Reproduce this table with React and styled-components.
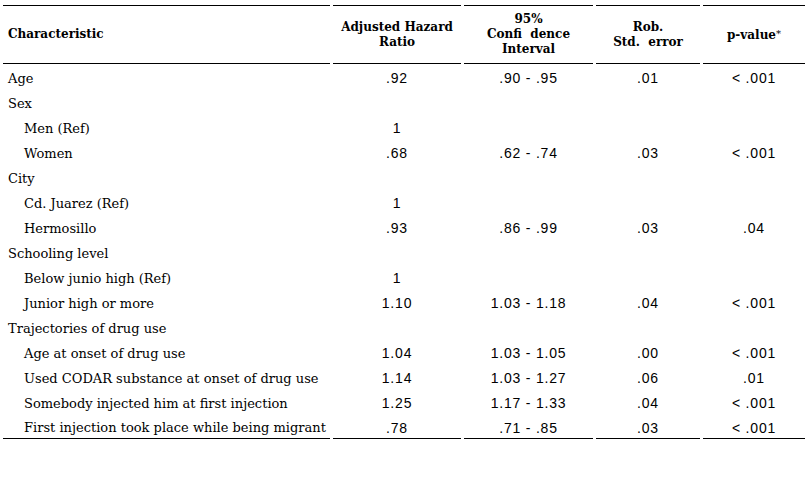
import styled, { createGlobalStyle } from "styled-components";

const GlobalStyle = createGlobalStyle`
  body {
    margin: 0;
    background: #fff;
    color: #000;
  }
`;

const rows = [
  { label: "Age", hr: ".92", ci: ".90 - .95", se: ".01", p: "< .001" },
  { label: "Sex" },
  { label: "Men (Ref)", sub: true, hr: "1" },
  { label: "Women", sub: true, hr: ".68", ci: ".62 - .74", se: ".03", p: "< .001" },
  { label: "City" },
  { label: "Cd. Juarez (Ref)", sub: true, hr: "1" },
  { label: "Hermosillo", sub: true, hr: ".93", ci: ".86 - .99", se: ".03", p: ".04" },
  { label: "Schooling level" },
  { label: "Below junio high (Ref)", sub: true, hr: "1" },
  { label: "Junior high or more", sub: true, hr: "1.10", ci: "1.03 - 1.18", se: ".04", p: "< .001" },
  { label: "Trajectories of drug use" },
  { label: "Age at onset of drug use", sub: true, hr: "1.04", ci: "1.03 - 1.05", se: ".00", p: "< .001" },
  { label: "Used CODAR substance at onset of drug use", sub: true, hr: "1.14", ci: "1.03 - 1.27", se: ".06", p: ".01" },
  { label: "Somebody injected him at first injection", sub: true, hr: "1.25", ci: "1.17 - 1.33", se: ".04", p: "< .001" },
  { label: "First injection took place while being migrant", sub: true, hr: ".78", ci: ".71 - .85", se: ".03", p: "< .001" },
];

const App = () => {
  return (
    <>
      <GlobalStyle />
      <Table>
        <colgroup>
          <col style={{ width: 327 }} />
          <col style={{ width: 128 }} />
          <col style={{ width: 129 }} />
          <col style={{ width: 104 }} />
          <col style={{ width: 102 }} />
        </colgroup>
        <thead>
          <tr>
            <Head $left>Characteristic</Head>
            <Head>Adjusted Hazard<br />Ratio</Head>
            <Head>95%<br />Confi&nbsp; dence<br />Interval</Head>
            <Head>Rob.<br />Std.&nbsp; error</Head>
            <Head>p-value<Star>*</Star></Head>
          </tr>
        </thead>
        <tbody>
          {rows.map((r, i) => (
            <Row key={i} $last={i === rows.length - 1}>
              <Label $sub={r.sub}>{r.label}</Label>
              <Num>{r.hr}</Num>
              <Num>{r.ci}</Num>
              <Num>{r.se}</Num>
              <Num>{r.p}</Num>
            </Row>
          ))}
        </tbody>
      </Table>
    </>
  );
};

const Table = styled.table`
  margin-top: 5px;
  width: 808px;
  table-layout: fixed;
  border-collapse: separate;
  border-spacing: 3px 0;
`;

const Head = styled.th`
  height: 57px;
  padding: 0;
  border-top: 1px solid #000;
  border-bottom: 1px solid #000;
  text-align: ${(p) => (p.$left ? "left" : "center")};
  padding-left: ${(p) => (p.$left ? "5px" : "0")};
  vertical-align: middle;
  font-family: "DejaVu Serif", serif;
  font-size: 12px;
  font-weight: bold;
  line-height: 15px;
`;

const Star = styled.span`
  font-weight: normal;
  font-size: 10px;
  vertical-align: 2px;
`;

const Row = styled.tr`
  height: 25px;
  & > td {
    border-bottom: ${(p) => (p.$last ? "1px solid #000" : "none")};
  }
`;

const Label = styled.td`
  padding: 3px 0 0 ${(p) => (p.$sub ? "21px" : "5px")};
  vertical-align: middle;
  font-family: "DejaVu Serif", serif;
  font-size: 13px;
  white-space: nowrap;
`;

const Num = styled.td`
  padding: 3px 0 0;
  text-align: center;
  vertical-align: middle;
  font-family: "Liberation Sans", Arial, sans-serif;
  font-size: 14px;
  letter-spacing: 0.8px;
  color: #000;
  white-space: pre;
`;

export default App;
